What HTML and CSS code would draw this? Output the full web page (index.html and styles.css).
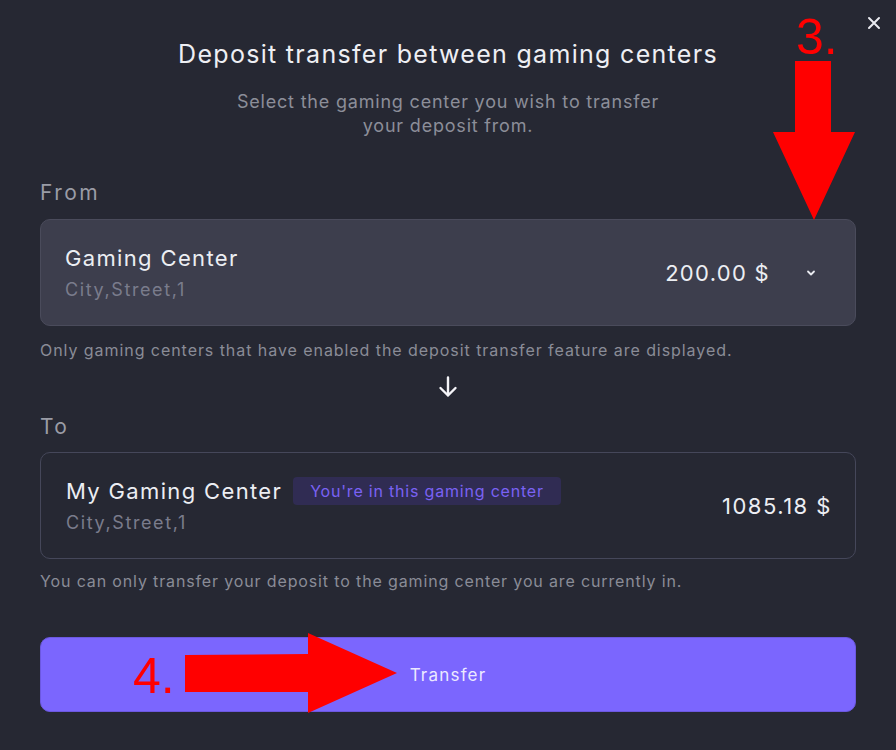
FILE: index.html
```html
<!DOCTYPE html>
<html lang="en">
<head>
<meta charset="utf-8">
<title>Deposit transfer</title>
<link rel="stylesheet" href="styles.css">
</head>
<body>
<div class="modal">
  <button class="close" aria-label="Close">
    <svg width="14" height="14" viewBox="0 0 14 14"><path d="M2 2L12 12M12 2L2 12" stroke="#e9eaf0" stroke-width="2" stroke-linecap="round"/></svg>
  </button>
  <h1 class="title">Deposit transfer between gaming centers</h1>
  <p class="subtitle">Select the gaming center you wish to transfer<br>your deposit from.</p>

  <div class="label label-from">From</div>
  <div class="card card-from">
    <div class="info">
      <div class="name">Gaming Center</div>
      <div class="addr">City,Street,1</div>
    </div>
    <div class="right">
      <span class="amount">200.00 $</span>
      <svg class="chev" width="10" height="8" viewBox="0 0 10 8"><path d="M2 2.5L5 5.5L8 2.5" fill="none" stroke="#e9eaf0" stroke-width="1.8" stroke-linecap="round" stroke-linejoin="round"/></svg>
    </div>
  </div>
  <p class="hint hint-from">Only gaming centers that have enabled the deposit transfer feature are displayed.</p>

  <div class="down">
    <svg width="24" height="24" viewBox="0 0 24 24"><path d="M12 2.5V20.5M4.5 13L12 20.5L19.5 13" fill="none" stroke="#f4f4f8" stroke-width="2.4" stroke-linecap="round" stroke-linejoin="round"/></svg>
  </div>

  <div class="label label-to">To</div>
  <div class="card card-to">
    <div class="info">
      <div class="name-row"><span class="name">My Gaming Center</span><span class="badge">You're in this gaming center</span></div>
      <div class="addr addr-to">City,Street,1</div>
    </div>
    <div class="right"><span class="amount amount-to">1085.18 $</span></div>
  </div>
  <p class="hint hint-to">You can only transfer your deposit to the gaming center you are currently in.</p>

  <button class="transfer">Transfer</button>
</div>

<div class="annot">
  <span class="num num3">3.</span>
  <span class="num num4">4.</span>
  <svg class="arrows" width="896" height="750" viewBox="0 0 896 750">
    <polygon points="795,61 831,61 831,132 855,132 814,220 773,132 795,132" fill="#ff0000"/>
    <polygon points="185,655 308,654 308,633 397,673 308,713 308,692 185,692" fill="#ff0000"/>
  </svg>
</div>
</body>
</html>
```

FILE: styles.css
```css
* { box-sizing: border-box; }
html, body { margin: 0; padding: 0; }
body {
  width: 896px;
  height: 750px;
  background: #262833;
  font-family: Inter, "Noto Sans", "Liberation Sans", sans-serif;
  color: #e9eaf0;
  position: relative;
  overflow: hidden;
}
.modal {
  display: flex;
  flex-direction: column;
  padding: 39px 40px 0 40px;
}
.close {
  position: absolute;
  top: 16px;
  right: 15px;
  width: 14px;
  height: 14px;
  padding: 0;
  border: 0;
  background: none;
  display: flex;
}
.title {
  margin: 0;
  text-align: center;
  font-size: 25px;
  line-height: 30px;
  font-weight: 400;
  color: #eeeff4;
  letter-spacing: 1.3px;
}
.subtitle {
  margin: 21px 0 0;
  text-align: center;
  font-size: 18px;
  line-height: 24px;
  color: #8c8e99;
  letter-spacing: 0.8px;
}
.label {
  font-size: 21px;
  line-height: 26px;
  color: #9a9ca6;
  letter-spacing: 2.4px;
}
.label-from { margin-top: 42px; }
.label-to { margin-top: 15px; }
.card {
  margin-top: 13px;
  height: 107px;
  border-radius: 10px;
  display: flex;
  align-items: center;
  justify-content: space-between;
}
.card-from {
  background: #3d3e4d;
  border: 1px solid #4a4b5b;
  padding: 0 39px 0 24px;
}
.card-to {
  margin-top: 12px;
  border: 1px solid #45475a;
  padding: 0 24px 0 25px;
}
.info { display: flex; flex-direction: column; }
.name {
  font-size: 22px;
  line-height: 26px;
  color: #eceef3;
  font-weight: 400;
  letter-spacing: 1.35px;
}
.addr {
  margin-top: 8px;
  font-size: 18px;
  line-height: 22px;
  color: #7a7c8c;
  letter-spacing: 1.6px;
}
.addr-to { margin-top: 7px; }
.name-row {
  display: flex;
  align-items: center;
  gap: 11px;
  height: 28px;
}
.badge {
  background: #302c53;
  color: #7a62f3;
  font-size: 16px;
  line-height: 28px;
  height: 28px;
  padding: 0 17px;
  border-radius: 4px;
  letter-spacing: 0.8px;
}
.right {
  display: flex;
  align-items: center;
  gap: 36px;
}
.amount {
  font-size: 22px;
  line-height: 26px;
  color: #eceef3;
  font-weight: 400;
  letter-spacing: 1.3px;
}
.amount-to { margin-right: -1px; letter-spacing: 1.5px; }
.chev { display: block; }
.hint {
  margin: 14px 0 0;
  font-size: 16px;
  line-height: 20px;
  color: #8a8c97;
  letter-spacing: 0.9px;
}
.hint-from { letter-spacing: 0.94px; }
.hint-to { margin-top: 12px; letter-spacing: 0.86px; }
.down {
  margin-top: 15px;
  display: flex;
  justify-content: center;
  height: 24px;
}
.down svg { display: block; }
.transfer {
  margin-top: 46px;
  height: 75px;
  border: 1px solid #6c58e0;
  border-radius: 10px;
  background: #7b66fe;
  color: #ece9ff;
  font-family: Inter, "Noto Sans", "Liberation Sans", sans-serif;
  font-size: 17px;
  letter-spacing: 1.2px;
}
.annot {
  position: absolute;
  left: 0;
  top: 0;
  width: 896px;
  height: 750px;
  pointer-events: none;
}
.arrows { position: absolute; left: 0; top: 0; }
.num {
  position: absolute;
  font-family: "Liberation Sans", Arial, sans-serif;
  font-size: 50px;
  line-height: 50px;
  color: #ff0000;
}
.num3 { left: 796px; top: 12px; }
.num4 { left: 133px; top: 651px; }
```
